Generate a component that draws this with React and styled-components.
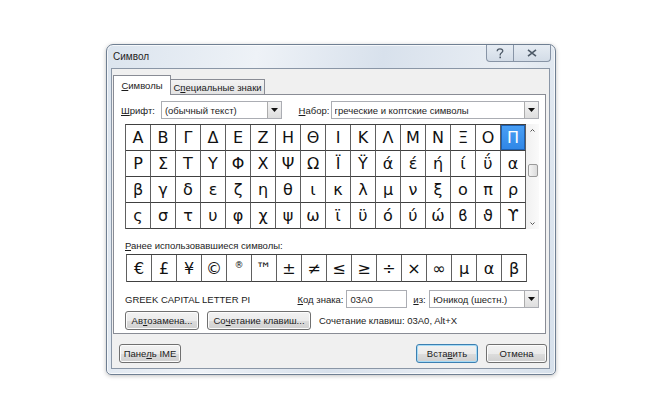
import * as React from 'react'
import styled, { createGlobalStyle, css } from 'styled-components'

const GlobalStyle = createGlobalStyle`
  body {
    margin: 0;
    background: #ffffff;
    font-family: "Liberation Sans", Arial, sans-serif;
    font-size: 9.5px;
    color: #1b1b1b;
  }
`;

const Desktop = styled.div`
  width: 659px;
  height: 393px;
  padding: 44px 0 0 106px;
  box-sizing: border-box;
`;

const Window = styled.div`
  width: 450px;
  height: 331px;
  box-sizing: border-box;
  border: 1px solid #6f7f92;
  border-radius: 7px 7px 5px 5px;
  background: linear-gradient(100deg, #dbe4ee 0%, #eef2f7 30%, #d8e1ec 55%, #e9eef4 80%, #d6e0eb 100%);
  box-shadow: 0 1px 4px rgba(0, 0, 0, 0.25), inset 0 0 0 1px rgba(255, 255, 255, 0.7);
  display: flex;
  flex-direction: column;
`;

const TitleBar = styled.div`
  height: 23px;
  display: flex;
  align-items: flex-start;
  padding-left: 6px;
`;

const Title = styled.div`
  line-height: 23px;
  font-size: 10px;
  color: #1e1e1e;
`;

const CaptionGroup = styled.div`
  margin-left: auto;
  margin-right: 4px;
  display: flex;
  height: 16px;
  border: 1px solid #8794a6;
  border-top: none;
  border-radius: 0 0 4px 4px;
  overflow: hidden;
  background: linear-gradient(#e6ecf3, #d3dce7);
`;

const CaptionButton = styled.div`
  width: ${p => p.$w}px;
  display: flex;
  align-items: center;
  justify-content: center;
  & + & {
    border-left: 1px solid #8794a6;
  }
`;

const Client = styled.div`
  flex: 1;
  margin: 0 5px 5px 4px;
  background: #f0f0f0;
  border: 1px solid #8a96a6;
  padding: 6px 3px 0 1px;
  display: flex;
  flex-direction: column;
`;

const Tabs = styled.div`
  display: flex;
  align-items: flex-end;
  height: 19px;
  position: relative;
  z-index: 1;
`;

const Tab = styled.div`
  box-sizing: border-box;
  border: 1px solid #898c95;
  border-bottom: none;
  display: flex;
  align-items: center;
  justify-content: center;
  width: ${p => p.$w}px;
  ${p => p.$active ? css`
    height: 20px;
    margin-bottom: -1px;
    background: #ffffff;
  ` : css`
    height: 15px;
    margin-left: -1px;
    background: linear-gradient(#f3f3f3, #e3e3e3);
  `}
`;

const Key = styled.span`
  text-decoration: underline;
  text-underline-offset: 1px;
`;

const Panel = styled.div`
  height: 240px;
  box-sizing: border-box;
  border: 1px solid #898c95;
  background: #ffffff;
  padding: 6px 6px 0 7px;
  display: flex;
  flex-direction: column;
`;

const Row = styled.div`
  display: flex;
  align-items: center;
  height: ${p => p.$h || 18}px;
  margin-top: ${p => p.$mt || 0}px;
  margin-left: ${p => p.$ml || 0}px;
`;

const Label = styled.span`
  margin-left: ${p => p.$ml || 0}px;
  margin-right: ${p => p.$mr ?? 4}px;
  width: ${p => p.$w ? `${p.$w}px` : 'auto'};
  white-space: nowrap;
`;

const Combo = styled.div`
  width: ${p => p.$w}px;
  height: 18px;
  box-sizing: border-box;
  border: 1px solid #abadb3;
  background: #ffffff;
  display: flex;
  align-items: center;
  padding-left: 3px;
`;

const ComboText = styled.span`
  flex: 1;
  white-space: nowrap;
  overflow: hidden;
`;

const ComboArrow = styled.div`
  width: 14px;
  height: 16px;
  box-sizing: border-box;
  border-left: 1px solid #acacac;
  background: linear-gradient(#f4f4f4, #dedede);
  display: flex;
  align-items: center;
  justify-content: center;
`;

const Input = styled.div`
  width: ${p => p.$w}px;
  height: 18px;
  box-sizing: border-box;
  border: 1px solid #abadb3;
  background: #ffffff;
  padding-left: 3px;
  display: flex;
  align-items: center;
`;

const GridWrap = styled.div`
  display: flex;
  margin-top: ${p => p.$mt}px;
  margin-left: ${p => p.$ml}px;
`;

const Grid = styled.div`
  display: grid;
  grid-template-columns: repeat(16, 25px);
  grid-auto-rows: ${p => p.$rowH}px;
  border-top: 1px solid #404040;
  border-left: 1px solid #606060;
  width: 401px;
  box-sizing: border-box;
`;

const Cell = styled.div`
  border-right: 1px solid #606060;
  border-bottom: 1px solid #404040;
  display: flex;
  align-items: center;
  justify-content: center;
  font-family: "DejaVu Sans", "Liberation Sans", sans-serif;
  font-size: ${p => p.$small ? 9 : 16}px;
  color: #111;
  ${p => p.$small && css`
    align-items: flex-start;
    padding-top: 5px;
  `}
  ${p => p.$selected && css`
    background: linear-gradient(#4aa0f5, #2f86e6);
    color: #ffffff;
    box-shadow: inset 0 0 0 1px #1d5fb0;
  `}
`;

const ScrollBar = styled.div`
  width: 13px;
  display: flex;
  flex-direction: column;
  align-items: center;
  background: linear-gradient(90deg, #f0f0f0, #fafafa);
`;

const ScrollArrow = styled.div`
  height: 12px;
  display: flex;
  align-items: center;
  justify-content: center;
`;

const ScrollTrack = styled.div`
  flex: 1;
  width: 100%;
  padding-top: 28px;
  display: flex;
  justify-content: center;
`;

const Thumb = styled.div`
  width: 10px;
  height: 13px;
  box-sizing: border-box;
  border: 1px solid #9a9a9a;
  border-radius: 2px;
  background: linear-gradient(90deg, #f4f4f4, #dcdcdc);
`;

const Button = styled.div`
  width: ${p => p.$w}px;
  height: 19px;
  box-sizing: border-box;
  border: 1px solid ${p => p.$default ? '#3c7fb1' : '#707070'};
  border-radius: 3px;
  background: linear-gradient(#f2f2f2 0%, #ebebeb 50%, #dddddd 51%, #cfcfcf 100%);
  box-shadow: inset 0 0 0 1px ${p => p.$default ? '#a6dbf6' : '#fcfcfc'};
  display: flex;
  align-items: center;
  justify-content: center;
  white-space: nowrap;
  flex-shrink: 0;
  margin-left: ${p => p.$ml || 0}px;
`;

const Footer = styled.div`
  display: flex;
  align-items: center;
  height: 19px;
  margin-top: 10px;
  padding-left: 6px;
`;

const mainRows = [
  'ΑΒΓΔΕΖΗΘΙΚΛΜΝΞΟΠ',
  'ΡΣΤΥΦΧΨΩΪΫάέήίΰα',
  'βγδεζηθικλμνξοπρ',
  'ςστυφχψωϊϋόύώϐϑϒ',
];

const recent = ['€', '£', '¥', '©', '®', '™', '±', '≠', '≤', '≥', '÷', '×', '∞', 'µ', 'α', 'β'];

const DownTri = () => (
  <svg width="7" height="4" viewBox="0 0 7 4"><polygon points="0,0 7,0 3.5,4" fill="#111" /></svg>
);

const ComboBox = ({ w, children }) => (
  <Combo $w={w}>
    <ComboText>{children}</ComboText>
    <ComboArrow><DownTri /></ComboArrow>
  </Combo>
);

const App = () => {
  return (
    <Desktop>
      <GlobalStyle />
      <Window>
        <TitleBar>
          <Title>Символ</Title>
          <CaptionGroup>
            <CaptionButton $w={26}>
              <svg width="8" height="11" viewBox="0 0 8 11">
                <path d="M1.2 3.2 C1.2 1.4 2.5 0.8 4 0.8 C5.6 0.8 6.8 1.7 6.8 3.1 C6.8 4.6 4.2 5 4.2 6.8 L4.2 7.4" fill="none" stroke="#4e5a68" strokeWidth="1.3" />
                <rect x="3.4" y="8.6" width="1.6" height="1.6" fill="#4e5a68" />
              </svg>
            </CaptionButton>
            <CaptionButton $w={36}>
              <svg width="10" height="8" viewBox="0 0 10 8">
                <path d="M1 0.8 L9 7.2 M9 0.8 L1 7.2" stroke="#4e5a68" strokeWidth="1.6" />
              </svg>
            </CaptionButton>
          </CaptionGroup>
        </TitleBar>
        <Client>
          <Tabs>
            <Tab $active $w={58}><Key>С</Key>имволы</Tab>
            <Tab $w={95}>С<Key>п</Key>ециальные знаки</Tab>
          </Tabs>
          <Panel>
            <Row $h={18}>
              <Label $w={36}><Key>Ш</Key>рифт:</Label>
              <ComboBox w={121}>(обычный текст)</ComboBox>
              <Label $ml={17} $w={28}><Key>Н</Key>абор:</Label>
              <ComboBox w={209}>греческие и коптские символы</ComboBox>
            </Row>
            <GridWrap $mt={5} $ml={4}>
              <Grid $rowH={26}>
                {mainRows.map((r, ri) =>
                  Array.from(r).map((ch, ci) => (
                    <Cell key={`${ri}-${ci}`} $selected={ri === 0 && ci === 15}>{ch}</Cell>
                  ))
                )}
              </Grid>
              <ScrollBar>
                <ScrollArrow>
                  <svg width="5" height="3" viewBox="0 0 5 3"><path d="M0.5 2.5 L2.5 0.5 L4.5 2.5" fill="none" stroke="#555" /></svg>
                </ScrollArrow>
                <ScrollTrack><Thumb /></ScrollTrack>
                <ScrollArrow>
                  <svg width="5" height="3" viewBox="0 0 5 3"><path d="M0.5 0.5 L2.5 2.5 L4.5 0.5" fill="none" stroke="#555" /></svg>
                </ScrollArrow>
              </ScrollBar>
            </GridWrap>
            <Row $h={14} $mt={9} $ml={4}>
              <Label><Key>Р</Key>анее использовавшиеся символы:</Label>
            </Row>
            <GridWrap $mt={2} $ml={5}>
              <Grid $rowH={27}>
                {recent.map((ch, i) => (
                  <Cell key={i} $small={ch === '®'}>{ch}</Cell>
                ))}
              </Grid>
            </GridWrap>
            <Row $h={18} $mt={8} $ml={4}>
              <Label $mr={0} $w={173}>GREEK CAPITAL LETTER PI</Label>
              <Label $w={45}><Key>К</Key>од знака:</Label>
              <Input $w={61}>03A0</Input>
              <Label $ml={6} $w={12}><Key>и</Key>з:</Label>
              <ComboBox w={110}>Юникод (шестн.)</ComboBox>
            </Row>
            <Row $h={19} $mt={3} $ml={4}>
              <Button $w={74}>Ав<Key>т</Key>озамена...</Button>
              <Button $w={104} $ml={8}>Со<Key>ч</Key>етание клавиш...</Button>
              <Label $ml={8}>Сочетание клавиш: 03A0, Alt+X</Label>
            </Row>
          </Panel>
          <Footer>
            <Button $w={62}>Пане<Key>л</Key>ь IME</Button>
            <Button $w={62} $ml={235} $default>Вста<Key>в</Key>ить</Button>
            <Button $w={61} $ml={8}>Отмена</Button>
          </Footer>
        </Client>
      </Window>
    </Desktop>
  )
}

export default App
